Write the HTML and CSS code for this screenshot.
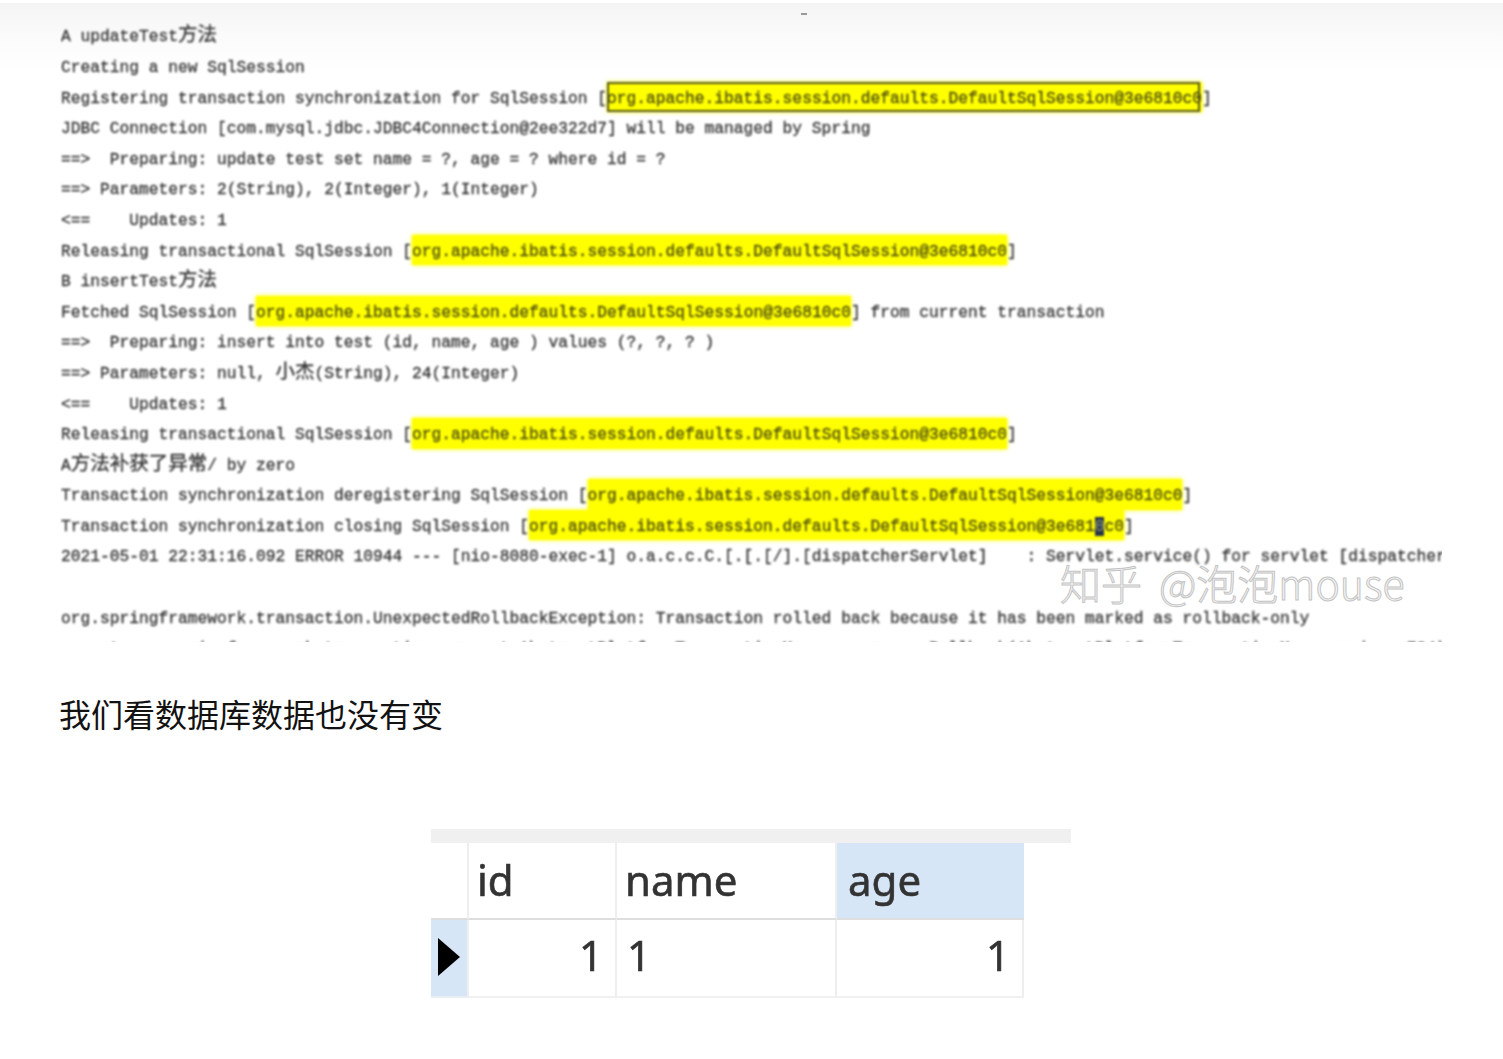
FILE: index.html
```html
<!DOCTYPE html>
<html lang="zh-CN">
<head>
<meta charset="utf-8">
<title>知乎文章</title>
<link rel="stylesheet" href="styles.css">
</head>
<body>
<article class="article">
  <span class="speck"></span>
  <figure class="shot">
    <div class="log">
      <div class="line">A updateTest<span class="cjk">方法</span></div>
      <div class="line">Creating a new SqlSession</div>
      <div class="line">Registering transaction synchronization for SqlSession [<span class="hl boxed">org.apache.ibatis.session.defaults.DefaultSqlSession@3e6810c0</span>]</div>
      <div class="line">JDBC Connection [com.mysql.jdbc.JDBC4Connection@2ee322d7] will be managed by Spring</div>
      <div class="line">==>  Preparing: update test set name = ?, age = ? where id = ?</div>
      <div class="line">==> Parameters: 2(String), 2(Integer), 1(Integer)</div>
      <div class="line">&lt;==    Updates: 1</div>
      <div class="line">Releasing transactional SqlSession [<span class="hl">org.apache.ibatis.session.defaults.DefaultSqlSession@3e6810c0</span>]</div>
      <div class="line">B insertTest<span class="cjk">方法</span></div>
      <div class="line">Fetched SqlSession [<span class="hl">org.apache.ibatis.session.defaults.DefaultSqlSession@3e6810c0</span>] from current transaction</div>
      <div class="line">==>  Preparing: insert into test (id, name, age ) values (?, ?, ? )</div>
      <div class="line">==> Parameters: null, <span class="cjk">小杰</span>(String), 24(Integer)</div>
      <div class="line">&lt;==    Updates: 1</div>
      <div class="line">Releasing transactional SqlSession [<span class="hl">org.apache.ibatis.session.defaults.DefaultSqlSession@3e6810c0</span>]</div>
      <div class="line">A<span class="cjk">方法补获了异常</span>/ by zero</div>
      <div class="line">Transaction synchronization deregistering SqlSession [<span class="hl">org.apache.ibatis.session.defaults.DefaultSqlSession@3e6810c0</span>]</div>
      <div class="line">Transaction synchronization closing SqlSession [<span class="hl">org.apache.ibatis.session.defaults.DefaultSqlSession@3e681<span class="caret">0</span>c0</span>]</div>
      <div class="line">2021-05-01 22:31:16.092 ERROR 10944 --- [nio-8080-exec-1] o.a.c.c.C.[.[.[/].[dispatcherServlet]    : Servlet.service() for servlet [dispatcherServlet] threw exception</div>
      <div class="line">&nbsp;</div>
      <div class="line">org.springframework.transaction.UnexpectedRollbackException: Transaction rolled back because it has been marked as rollback-only</div>
      <div class="line">    at org.springframework.transaction.support.AbstractPlatformTransactionManager.processRollback(AbstractPlatformTransactionManager.java:724)</div>
    </div>
    <div class="watermark">知乎 @泡泡mouse</div>
  </figure>

  <p class="para">我们看数据库数据也没有变</p>

  <figure class="result">
    <div class="band"></div>
    <div class="grid">
      <div class="cell corner"></div>
      <div class="cell head">id</div>
      <div class="cell head">name</div>
      <div class="cell head head-selected">age</div>
      <div class="cell marker">
        <svg class="arrow" width="22" height="38" viewBox="0 0 22 38"><polygon points="0,0 22,19 0,38"/></svg>
      </div>
      <div class="cell num">1</div>
      <div class="cell txt">1</div>
      <div class="cell num">1</div>
    </div>
  </figure>
</article>
</body>
</html>
```

FILE: styles.css
```css
html, body {
  margin: 0;
  background: #fff;
}

body {
  padding-top: 3px;
}

.article {
  position: relative;
  padding: 0 61px 0 60px;
  background: linear-gradient(#f4f4f4 0, #fbfbfb 34px, #fff 70px);
}

.speck {
  position: absolute;
  left: 801px;
  top: 10px;
  width: 6px;
  height: 2px;
  background: #999;
}

.shot {
  position: relative;
  margin: 0;
  height: 639px;
  padding-top: 19.4px;
  box-sizing: border-box;
  overflow: hidden;
}

.log {
  font-family: "Liberation Mono", "Noto Sans CJK SC", monospace;
  font-size: 16.25px;
  color: #333;
  -webkit-text-stroke: 0.3px #333;
  filter: blur(0.85px);
}

.line {
  height: 30.6px;
  line-height: 30.6px;
  margin-left: 1px;
  white-space: pre;
}

.cjk {
  font-family: "Noto Sans CJK SC", sans-serif;
  font-size: 19.5px;
  line-height: 20px;
}

.hl {
  display: inline-block;
  margin-top: -3px;
  padding-top: 3px;
  line-height: 27.6px;
  background: #ffff00;
  color: #4d4d10;
  -webkit-text-stroke-color: #4d4d10;
  box-shadow: 0 0 4px #ffff00;
}

.boxed {
  position: relative;
}

.boxed::after {
  content: "";
  position: absolute;
  top: 0;
  bottom: 0;
  left: 0;
  right: 2px;
  border: 2px solid #55551a;
  box-sizing: border-box;
}

.caret {
  background: #26324a;
  color: #7f8a70;
  -webkit-text-stroke-color: #7f8a70;
}

.watermark {
  position: absolute;
  left: 1000px;
  top: 551px;
  font-family: "Noto Sans CJK SC", sans-serif;
  font-size: 41px;
  line-height: 56px;
  font-weight: 200;
  word-spacing: 8px;
  white-space: nowrap;
  color: #f6f6f6;
  -webkit-text-stroke: 1px #c4c4c4;
}

.para {
  margin: 48px 0 0 -1px;
  font-family: "Noto Sans CJK SC", sans-serif;
  font-size: 32px;
  line-height: 46px;
  color: #121212;
}

.result {
  width: 640px;
  margin: 93px auto 0;
  filter: blur(0.6px);
}

.band {
  height: 14px;
  background: #f0f0f0;
}

.grid {
  display: grid;
  grid-template-columns: 38px 148px 220px 187px;
  grid-template-rows: 77px 78px;
  width: 593px;
  font-family: "Noto Sans", sans-serif;
  font-size: 42px;
  color: #333;
  -webkit-text-stroke: 0.6px #333;
}

.cell {
  box-sizing: border-box;
  display: flex;
  align-items: center;
  border-right: 2px solid #eeeeee;
  border-bottom: 2px solid #dedede;
}

.corner {
  background: #fff;
}

.head {
  padding-left: 8px;
  padding-bottom: 2px;
}

.head-selected {
  padding-left: 11px;
  background: #d6e6f6;
  border-right: 0;
}

.marker {
  background: #d6e6f6;
  border-bottom-color: #e8eef4;
  padding-left: 7px;
  padding-bottom: 2px;
}

.arrow {
  fill: #000;
}

.num {
  justify-content: flex-end;
  padding-right: 12px;
  padding-bottom: 7px;
  border-bottom-color: #f0f0f0;
}

.txt {
  padding-left: 10px;
  padding-bottom: 7px;
  border-bottom-color: #f0f0f0;
}
```
